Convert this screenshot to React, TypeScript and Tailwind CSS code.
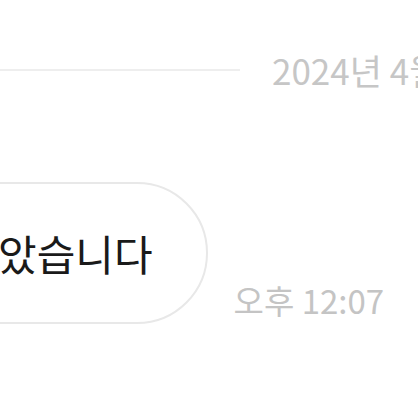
export default function App() {
  const font = { fontFamily: '"Noto Sans CJK KR", "Noto Sans", sans-serif' };
  return (
    <div className="w-[418px] h-[418px] overflow-hidden bg-white" style={font}>
      <div className="flex items-center gap-8 w-[600px] pt-[50px]">
        <div className="w-[240px] h-[2px] bg-[#eeeeee]" />
        <span className="text-[35px] leading-[40px] text-[#c6c6c6] whitespace-nowrap">2024년 4월 10일</span>
      </div>
      <div className="flex items-end gap-[26px] mt-[92px]">
        <div className="ml-[-120px] h-[142px] flex items-center pl-[116px] pr-[53px] rounded-full border-2 border-[#e8e8e8] bg-white">
          <span className="text-[42px] leading-none text-[#1a1a1a] whitespace-nowrap">았습니다</span>
        </div>
        <span className="text-[33px] leading-[38px] mb-[5px] text-[#c4c4c4] whitespace-nowrap">오후 12:07</span>
      </div>
    </div>
  );
}
